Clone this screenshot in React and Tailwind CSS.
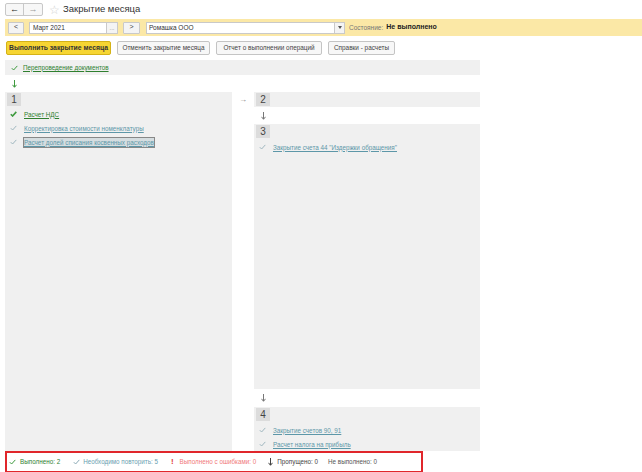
import React from "react";

const Check = ({ color = "#8aa9b5", bold = false }) => (
  <svg width="7" height="6" viewBox="0 0 7 6" className="shrink-0">
    <path d="M0.8 3.2 L2.6 5 L6.3 0.9" fill="none" stroke={color} strokeWidth={bold ? 1.6 : 1} />
  </svg>
);

const DownArrow = ({ color = "#777" }) => (
  <svg width="5" height="8" viewBox="0 0 5 8">
    <path d="M2.5 0 V7 M0.5 4.8 L2.5 7.3 L4.5 4.8" fill="none" stroke={color} strokeWidth="1" />
  </svg>
);

const Num = ({ n }) => (
  <div className="w-[14px] h-[13px] bg-[#dcdcdc] text-[#444] text-[10px] leading-[13px] text-center">{n}</div>
);

const Item = ({ text, done, sel }) => (
  <div className="flex items-center gap-[7px] h-[14px] pl-[3px]">
    <Check color={done ? "#3f9a3f" : "#9fb6bf"} bold={done} />
    <span
      className={
        "underline text-[6.3px] leading-[9px] " +
        (done ? "text-[#2f7f2f]" : "text-[#5d97a8]") +
        (sel ? " bg-[#d5dde0] outline outline-1 outline-[#888]" : "")
      }
    >
      {text}
    </span>
  </div>
);

export default function App() {
  return (
    <div className="w-[642px] h-[472px] bg-white relative overflow-hidden" style={{ fontFamily: '"Liberation Sans", Arial, sans-serif' }}>
      {/* title */}
      <div className="flex items-center h-[18px] pl-[5px] pt-[1px]">
        <div className="flex border border-[#c8c8c8] rounded-[2px] h-[13px] bg-[#f7f7f7]">
          <div className="w-[18px] flex items-center justify-center text-[9px] text-[#222] border-r border-[#c8c8c8]">←</div>
          <div className="w-[18px] flex items-center justify-center text-[9px] text-[#999]">→</div>
        </div>
        <span className="ml-[6px] text-[12px] text-[#d0d0d0] leading-none">☆</span>
        <span className="ml-[3px] text-[9.5px] text-[#333]">Закрытие месяца</span>
      </div>
      {/* yellow band */}
      <div className="ml-[5px] mt-[1px] h-[17px] bg-[#fbe8a6] flex items-center pl-[3px] gap-0">
        <div className="w-[16px] h-[12px] bg-[#f4f4f4] border border-[#c9c9c9] rounded-[1px] text-[7px] text-[#444] flex items-center justify-center">&lt;</div>
        <div className="ml-[5px] w-[78px] h-[12px] bg-white border border-[#c9c9c9] text-[6.5px] text-[#333] flex items-center pl-[3px]">Март 2021</div>
        <div className="w-[11px] h-[12px] bg-[#f4f4f4] border border-[#c9c9c9] border-l-0 text-[6px] text-[#888] flex items-end justify-center">...</div>
        <div className="ml-[5px] w-[17px] h-[12px] bg-[#f4f4f4] border border-[#c9c9c9] rounded-[1px] text-[7px] text-[#444] flex items-center justify-center">&gt;</div>
        <div className="ml-[6px] w-[189px] h-[12px] bg-white border border-[#c9c9c9] text-[6.5px] text-[#333] flex items-center pl-[2px]">Ромашка ООО</div>
        <div className="w-[10px] h-[12px] bg-[#f4f4f4] border border-[#c9c9c9] border-l-0 flex items-center justify-center">
          <svg width="4" height="3" viewBox="0 0 4 3"><path d="M0 0 H4 L2 3 Z" fill="#555" /></svg>
        </div>
        <span className="ml-[4px] text-[6.5px] text-[#777]">Состояние:</span>
        <span className="ml-[3px] text-[7px] font-bold text-[#222]">Не выполнено</span>
      </div>
      {/* buttons */}
      <div className="flex items-center ml-[6px] mt-[5px] gap-[6px] h-[14px]">
        <div className="w-[105px] h-[14px] bg-[#f6d532] border border-[#d4b217] rounded-[2px] text-[6.8px] font-bold text-[#333] flex items-center justify-center">Выполнить закрытие месяца</div>
        <div className="w-[93px] h-[14px] bg-[#f7f7f7] border border-[#c4c4c4] rounded-[2px] text-[6.4px] text-[#444] flex items-center justify-center">Отменить закрытие месяца</div>
        <div className="w-[106px] h-[14px] bg-[#f7f7f7] border border-[#c4c4c4] rounded-[2px] text-[6.4px] text-[#444] flex items-center justify-center">Отчет о выполнении операций</div>
        <div className="w-[67px] h-[14px] bg-[#f7f7f7] border border-[#c4c4c4] rounded-[2px] text-[6.4px] text-[#444] flex items-center justify-center">Справки - расчеты</div>
      </div>
      {/* reconduct row */}
      <div className="ml-[5px] mt-[5px] w-[475px] h-[15px] bg-[#f0f0f0] flex items-center pl-[6px] gap-[5px]">
        <Check color="#3f9a3f" />
        <span className="underline text-[6.3px] text-[#2f7f2f]">Перепроведение документов</span>
      </div>
      <div className="ml-[12px] h-[17px] flex items-center">
        <DownArrow color="#3f9a3f" />
      </div>
      {/* main */}
      <div className="flex ml-[5px] h-[359px]">
        <div className="w-[227px] bg-[#f0f0f0] pt-[1px] pl-[2px]">
          <Num n="1" />
          <div className="mt-[1px] flex flex-col gap-0">
            <Item text="Расчет НДС" done />
            <Item text="Корректировка стоимости номенклатуры" />
            <Item text="Расчет долей списания косвенных расходов" sel />
          </div>
        </div>
        <div className="w-[22px] flex justify-center pt-[4px]">
          <span className="text-[8px] text-[#888] leading-none">→</span>
        </div>
        <div className="w-[226px] flex flex-col">
          <div className="h-[15px] bg-[#f0f0f0] pt-[1px] pl-[2px]"><Num n="2" /></div>
          <div className="h-[17px] pl-[7px] flex items-center"><DownArrow /></div>
          <div className="flex-1 bg-[#f0f0f0] pt-[1px] pl-[2px]">
            <Num n="3" />
            <div className="mt-[2px]">
              <Item text={"Закрытие счета 44 \"Издержки обращения\""} />
            </div>
          </div>
          <div className="h-[18px] pl-[7px] flex items-center"><DownArrow /></div>
          <div className="h-[44px] bg-[#f0f0f0] pt-[1px] pl-[2px]">
            <Num n="4" />
            <div className="mt-[2px]">
              <Item text="Закрытие счетов 90, 91" />
              <Item text="Расчет налога на прибыль" />
            </div>
          </div>
        </div>
      </div>
      {/* status bar */}
      <div className="ml-[5px] w-[418px] h-[22px] border-2 border-[#e0262b] flex items-center pl-[2px] text-[6.3px]">
        <Check color="#3f9a3f" />
        <span className="ml-[4px] text-[#2f7f2f]">Выполнено: 2</span>
        <span className="ml-[13px]"><Check color="#8aa9b5" /></span>
        <span className="ml-[3px] text-[#6aa0b0]">Необходимо повторить: 5</span>
        <span className="ml-[13px] text-[#e03a3a] font-bold text-[8px]">!</span>
        <span className="ml-[6px] text-[#f07a7a]">Выполнено с ошибками: 0</span>
        <span className="ml-[12px]"><DownArrow color="#444" /></span>
        <span className="ml-[4px] text-[#444]">Пропущено: 0</span>
        <span className="ml-[10px] text-[#555]">Не выполнено: 0</span>
      </div>
    </div>
  );
}
